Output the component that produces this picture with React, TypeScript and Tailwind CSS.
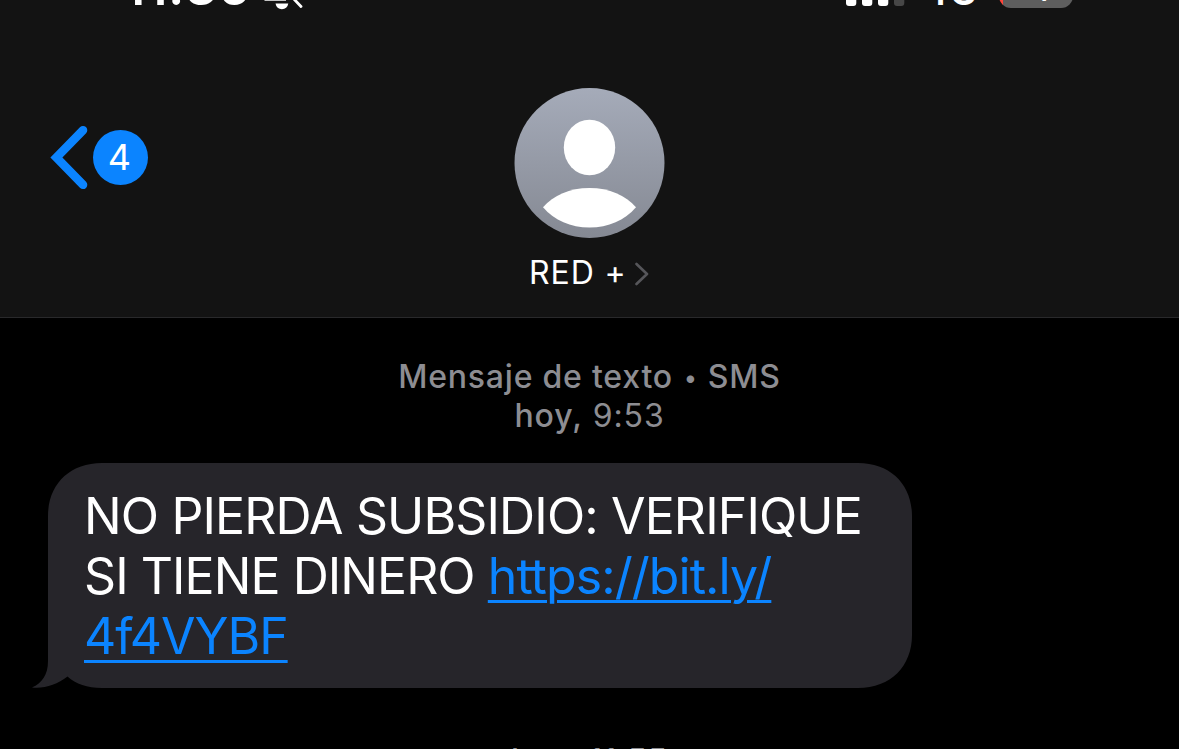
import React from "react";

function StatusBar() {
  return (
    <div className="flex h-[88px] items-start text-white">
      <div className="ml-[124px] mt-[-43px] w-[126px] whitespace-nowrap text-[50px] font-semibold leading-[60px] tracking-[1px]">
        11:36
      </div>
      <svg className="ml-[13px] h-[12px] w-[42px]" viewBox="0 0 42 12" aria-hidden="true">
        <path d="M1 0H23L23 0.8H2Z" fill="#fff" />
        <path d="M12.5 3.6H25.3C24.6 7.4 22.3 9.2 18.9 9.2C15.5 9.2 13.2 7.4 12.5 3.6Z" fill="#fff" />
        <path d="M29 -3L38 6.5" stroke="#fff" strokeWidth="2.8" strokeLinecap="round" />
      </svg>
      <svg className="ml-[541px] h-[12px] w-[60px]" viewBox="0 0 60 12" aria-hidden="true">
        <rect x="0" y="-10" width="10.3" height="16" rx="3" fill="#fff" />
        <rect x="16" y="-12" width="10.3" height="18" rx="3" fill="#fff" />
        <rect x="32" y="-14" width="10.3" height="20" rx="3" fill="#fff" />
        <rect x="48" y="-16" width="10.3" height="22" rx="3" fill="#474747" />
      </svg>
      <div className="ml-[17px] mt-[-36px] w-[57px] whitespace-nowrap text-[38px] font-semibold leading-[54px] tracking-[1px]">
        4G
      </div>
      <div className="ml-[19px] mt-[-28px] flex h-[36px] w-[74px] justify-end overflow-hidden rounded-[12px] bg-linear-to-r from-[#ff453a] from-[4px] to-[#5e5e5e] to-[4px] pr-[23px]">
        <span className="text-[28px] font-semibold leading-[38px]">4</span>
      </div>
    </div>
  );
}

function Avatar() {
  return (
    <svg className="block h-[150px] w-[151px]" viewBox="0 0 151 150" aria-hidden="true">
      <defs>
        <linearGradient id="avatar" x1="0" y1="0" x2="0" y2="1">
          <stop offset="0" stopColor="#a5abb9" />
          <stop offset="1" stopColor="#858993" />
        </linearGradient>
      </defs>
      <circle cx="75.5" cy="75" r="75" fill="url(#avatar)" />
      <ellipse cx="75.5" cy="59.5" rx="25.7" ry="27.8" fill="#fff" />
      <path d="M29 119.3C39.5 107.5 55.5 100 75.5 100C95.5 100 111.5 107.5 122 119.3C110.5 132.5 94.5 139.5 75.5 139.5C56.5 139.5 40.5 132.5 29 119.3Z" fill="#fff" />
    </svg>
  );
}

function Header() {
  return (
    <header className="h-[318px] shrink-0 overflow-hidden border-b border-[#29292b] bg-[#131313]">
      <StatusBar />
      <div className="grid grid-cols-[1fr_151px_1fr]">
        <div className="flex items-start pl-[50px] pt-[37px]">
          <svg className="h-[65px] w-[39px]" viewBox="0 0 39 65" fill="none" aria-hidden="true">
            <path d="M33 5.2L6.4 32.5L33 59.8" stroke="#0b84ff" strokeWidth="8.6" strokeLinecap="round" strokeLinejoin="miter" />
          </svg>
          <span className="ml-[3.5px] mt-[4.5px] flex h-[55px] w-[55px] items-center justify-center rounded-full bg-[#0b84ff] pr-[1px] text-[36px] leading-none text-white">
            4
          </span>
        </div>
        <Avatar />
      </div>
      <div className="mt-[15px] flex items-center pl-[529px]">
        <span className="w-[97px] whitespace-nowrap text-[32px] leading-[40px] tracking-[0.9px] text-white [font-feature-settings:'calt'_0]">
          RED +
        </span>
        <svg className="ml-[9px] mt-[2px] h-[24px] w-[14px]" viewBox="0 0 14 24" fill="none" aria-hidden="true">
          <path d="M1.5 2L12 12L1.5 22" stroke="#56565a" strokeWidth="2.6" strokeLinecap="round" strokeLinejoin="round" />
        </svg>
      </div>
    </header>
  );
}

function Message() {
  return (
    <div className="relative ml-[48px] mt-[28px] h-[225px] w-[864px]">
      <svg className="absolute left-[-17px] top-0 h-[225px] w-[881px]" viewBox="0 0 881 225" aria-hidden="true">
        <path
          d="M71 0H827C860 0 881 22 881 53V172C881 203 860 225 827 225H71C56 225 45 221 36.5 213.5C26 221.5 13 226 1 224.5C11 220 17 212 17 198V53C17 22 38 0 71 0Z"
          fill="#26252a"
        />
      </svg>
      <div className="relative pl-[36px] pt-[23px] text-[50px] leading-[60px] text-white [font-feature-settings:'calt'_0]">
        <div className="whitespace-nowrap tracking-[-0.86px]">NO PIERDA SUBSIDIO: VERIFIQUE</div>
        <div className="whitespace-nowrap tracking-[-0.94px]">
          SI TIENE DINERO{" "}
          <span className="text-[#0b84ff] underline decoration-[3px] underline-offset-[6px]">https://bit.ly/</span>
        </div>
        <div className="whitespace-nowrap tracking-[-1px]">
          <span className="text-[#0b84ff] underline decoration-[3px] underline-offset-[6px]">4f4VYBF</span>
        </div>
      </div>
    </div>
  );
}

export default function App() {
  return (
    <div className="flex h-[749px] w-[1179px] flex-col overflow-hidden bg-black font-['Inter','Liberation_Sans',sans-serif]">
      <Header />
      <main className="min-h-0 flex-1 overflow-hidden">
        <div className="mt-[39px] text-center text-[32px] leading-[39px] text-[#8d8d92]">
          <div className="flex h-[39px] justify-center whitespace-nowrap font-medium tracking-[0.78px]">
            <span>Mensaje de texto</span>
            <span className="w-[35px] text-center text-[24px] leading-[41px] tracking-normal">•</span>
            <span>SMS</span>
          </div>
          <div className="h-[39px] whitespace-nowrap tracking-[0.9px]">
            <span className="font-medium">hoy,</span> 9:53
          </div>
        </div>
        <Message />
        <div className="mt-[53px] whitespace-nowrap text-center text-[32px] leading-[39px] tracking-[0.9px] text-[#8d8d92]">
          <span className="font-medium">hoy,</span> 11:55
        </div>
      </main>
    </div>
  );
}
